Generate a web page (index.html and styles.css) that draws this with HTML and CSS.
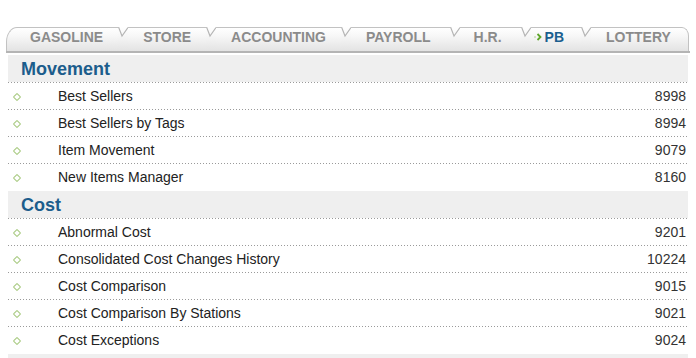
FILE: index.html
```html
<!DOCTYPE html>
<html>
<head>
<meta charset="utf-8">
<link rel="stylesheet" href="styles.css">
</head>
<body>
<nav class="tabs">
  <a class="tab first">GASOLINE</a>
  <span class="sep"><svg width="10" height="24" viewBox="0 0 10 24"><path d="M0.5 0 L4 9 L10 0.5" fill="none" stroke="#b4b4b4" stroke-width="1.2"/></svg></span>
  <a class="tab">STORE</a>
  <span class="sep"><svg width="10" height="24" viewBox="0 0 10 24"><path d="M0.5 0 L4 9 L10 0.5" fill="none" stroke="#b4b4b4" stroke-width="1.2"/></svg></span>
  <a class="tab">ACCOUNTING</a>
  <span class="sep"><svg width="10" height="24" viewBox="0 0 10 24"><path d="M0.5 0 L4 9 L10 0.5" fill="none" stroke="#b4b4b4" stroke-width="1.2"/></svg></span>
  <a class="tab payroll">PAYROLL</a>
  <span class="sep"><svg width="10" height="24" viewBox="0 0 10 24"><path d="M0.5 0 L4 9 L10 0.5" fill="none" stroke="#b4b4b4" stroke-width="1.2"/></svg></span>
  <a class="tab hr">H.R.</a>
  <span class="sep"><svg width="10" height="24" viewBox="0 0 10 24"><path d="M0.5 0 L4 9 L10 0.5" fill="none" stroke="#b4b4b4" stroke-width="1.2"/></svg></span>
  <a class="tab active"><svg class="arrow" width="9" height="8" viewBox="0 0 9 8"><circle cx="1" cy="4" r="0.8" fill="#a9cf86"/><path d="M3.5 1 L6.5 4 L3.5 7" fill="none" stroke="#5fa52a" stroke-width="1.8"/></svg>PB</a>
  <span class="sep"><svg width="10" height="24" viewBox="0 0 10 24"><path d="M0.5 0 L4 9 L10 0.5" fill="none" stroke="#b4b4b4" stroke-width="1.2"/></svg></span>
  <a class="tab last">LOTTERY</a>
</nav>

<main class="content">
  <section class="section">
    <h2 class="section-head">Movement</h2>
    <ul class="list">
      <li class="row"><span class="bullet"></span><span class="label">Best Sellers</span><span class="num">8998</span></li>
      <li class="row"><span class="bullet"></span><span class="label">Best Sellers by Tags</span><span class="num">8994</span></li>
      <li class="row"><span class="bullet"></span><span class="label">Item Movement</span><span class="num">9079</span></li>
      <li class="row"><span class="bullet"></span><span class="label">New Items Manager</span><span class="num">8160</span></li>
    </ul>
  </section>
  <section class="section">
    <h2 class="section-head">Cost</h2>
    <ul class="list">
      <li class="row"><span class="bullet"></span><span class="label">Abnormal Cost</span><span class="num">9201</span></li>
      <li class="row"><span class="bullet"></span><span class="label">Consolidated Cost Changes History</span><span class="num">10224</span></li>
      <li class="row"><span class="bullet"></span><span class="label">Cost Comparison</span><span class="num">9015</span></li>
      <li class="row"><span class="bullet"></span><span class="label">Cost Comparison By Stations</span><span class="num">9021</span></li>
      <li class="row"><span class="bullet"></span><span class="label">Cost Exceptions</span><span class="num">9024</span></li>
    </ul>
  </section>
  <div class="section-end"></div>
</main>
</body>
</html>
```
FILE: styles.css
```css
html, body {
  margin: 0;
  padding: 0;
  background: #fff;
  font-family: "Liberation Sans", Arial, sans-serif;
}

.tabs {
  display: flex;
  align-items: flex-start;
  margin: 27px 0 0 6px;
  width: 684px;
  border-bottom: 2px solid #b4b4b4;
}

.tab, .sep {
  background: linear-gradient(#ffffff 0%, #f7f7f7 35%, #e3e3e3 100%);
  height: 24px;
}

.tab {
  display: flex;
  align-items: flex-start;
  box-sizing: border-box;
  border-top: 1px solid #c2c2c2;
  padding: 1px 15px 0 15px;
  font-size: 14px;
  line-height: 16px;
  font-weight: bold;
  color: #8b8b8b;
  white-space: nowrap;
}

.tab.first {
  padding-left: 23px;
  border-left: 1px solid #c2c2c2;
  border-top-left-radius: 11px 15px;
}

.tab.payroll {
  padding-right: 19px;
}

.tab.hr {
  padding-left: 14px;
  padding-right: 19px;
}

.tab.last {
  padding-left: 15px;
  padding-right: 17px;
  border-right: 1px solid #c2c2c2;
  border-top-right-radius: 7px 9px;
}

.tab.active {
  color: #1b5f8f;
  padding-left: 3px;
  padding-right: 17px;
}

.arrow {
  margin: 4px 2px 0 0;
}

.sep {
  display: block;
  width: 10px;
}

.sep svg {
  display: block;
}

.content {
  margin: 2px 0 0 8px;
  width: 680px;
}

.section-head {
  margin: 0;
  height: 27px;
  box-sizing: border-box;
  padding: 4px 0 0 13px;
  background-color: #efefef;
  font-size: 18px;
  line-height: 20px;
  font-weight: bold;
  color: #1c5d8c;
}

.section-end {
  height: 4px;
  background-color: #efefef;
}

.list {
  list-style: none;
  margin: 0;
  padding: 1px 0 0 0;
  background-image: linear-gradient(to right, #9a9a9a 1px, transparent 1px);
  background-size: 3px 1px;
  background-repeat: repeat-x;
  background-position: 0 0;
}

.row {
  display: flex;
  align-items: center;
  height: 27px;
  box-sizing: border-box;
  padding-bottom: 1px;
  background-image: linear-gradient(to right, #9a9a9a 1px, transparent 1px);
  background-size: 3px 1px;
  background-repeat: repeat-x;
  background-position: 0 100%;
  font-size: 14px;
  color: #222;
}

.row:last-child {
  background-image: none;
}

.bullet {
  width: 4px;
  height: 4px;
  margin: 2px 0 0 6px;
  border: 1px solid #a6c97e;
  transform: rotate(45deg);
  border-radius: 1px;
  flex: none;
}

.label {
  margin-left: 38px;
  flex: 1;
}

.num {
  padding-right: 2px;
  color: #333;
}
```
